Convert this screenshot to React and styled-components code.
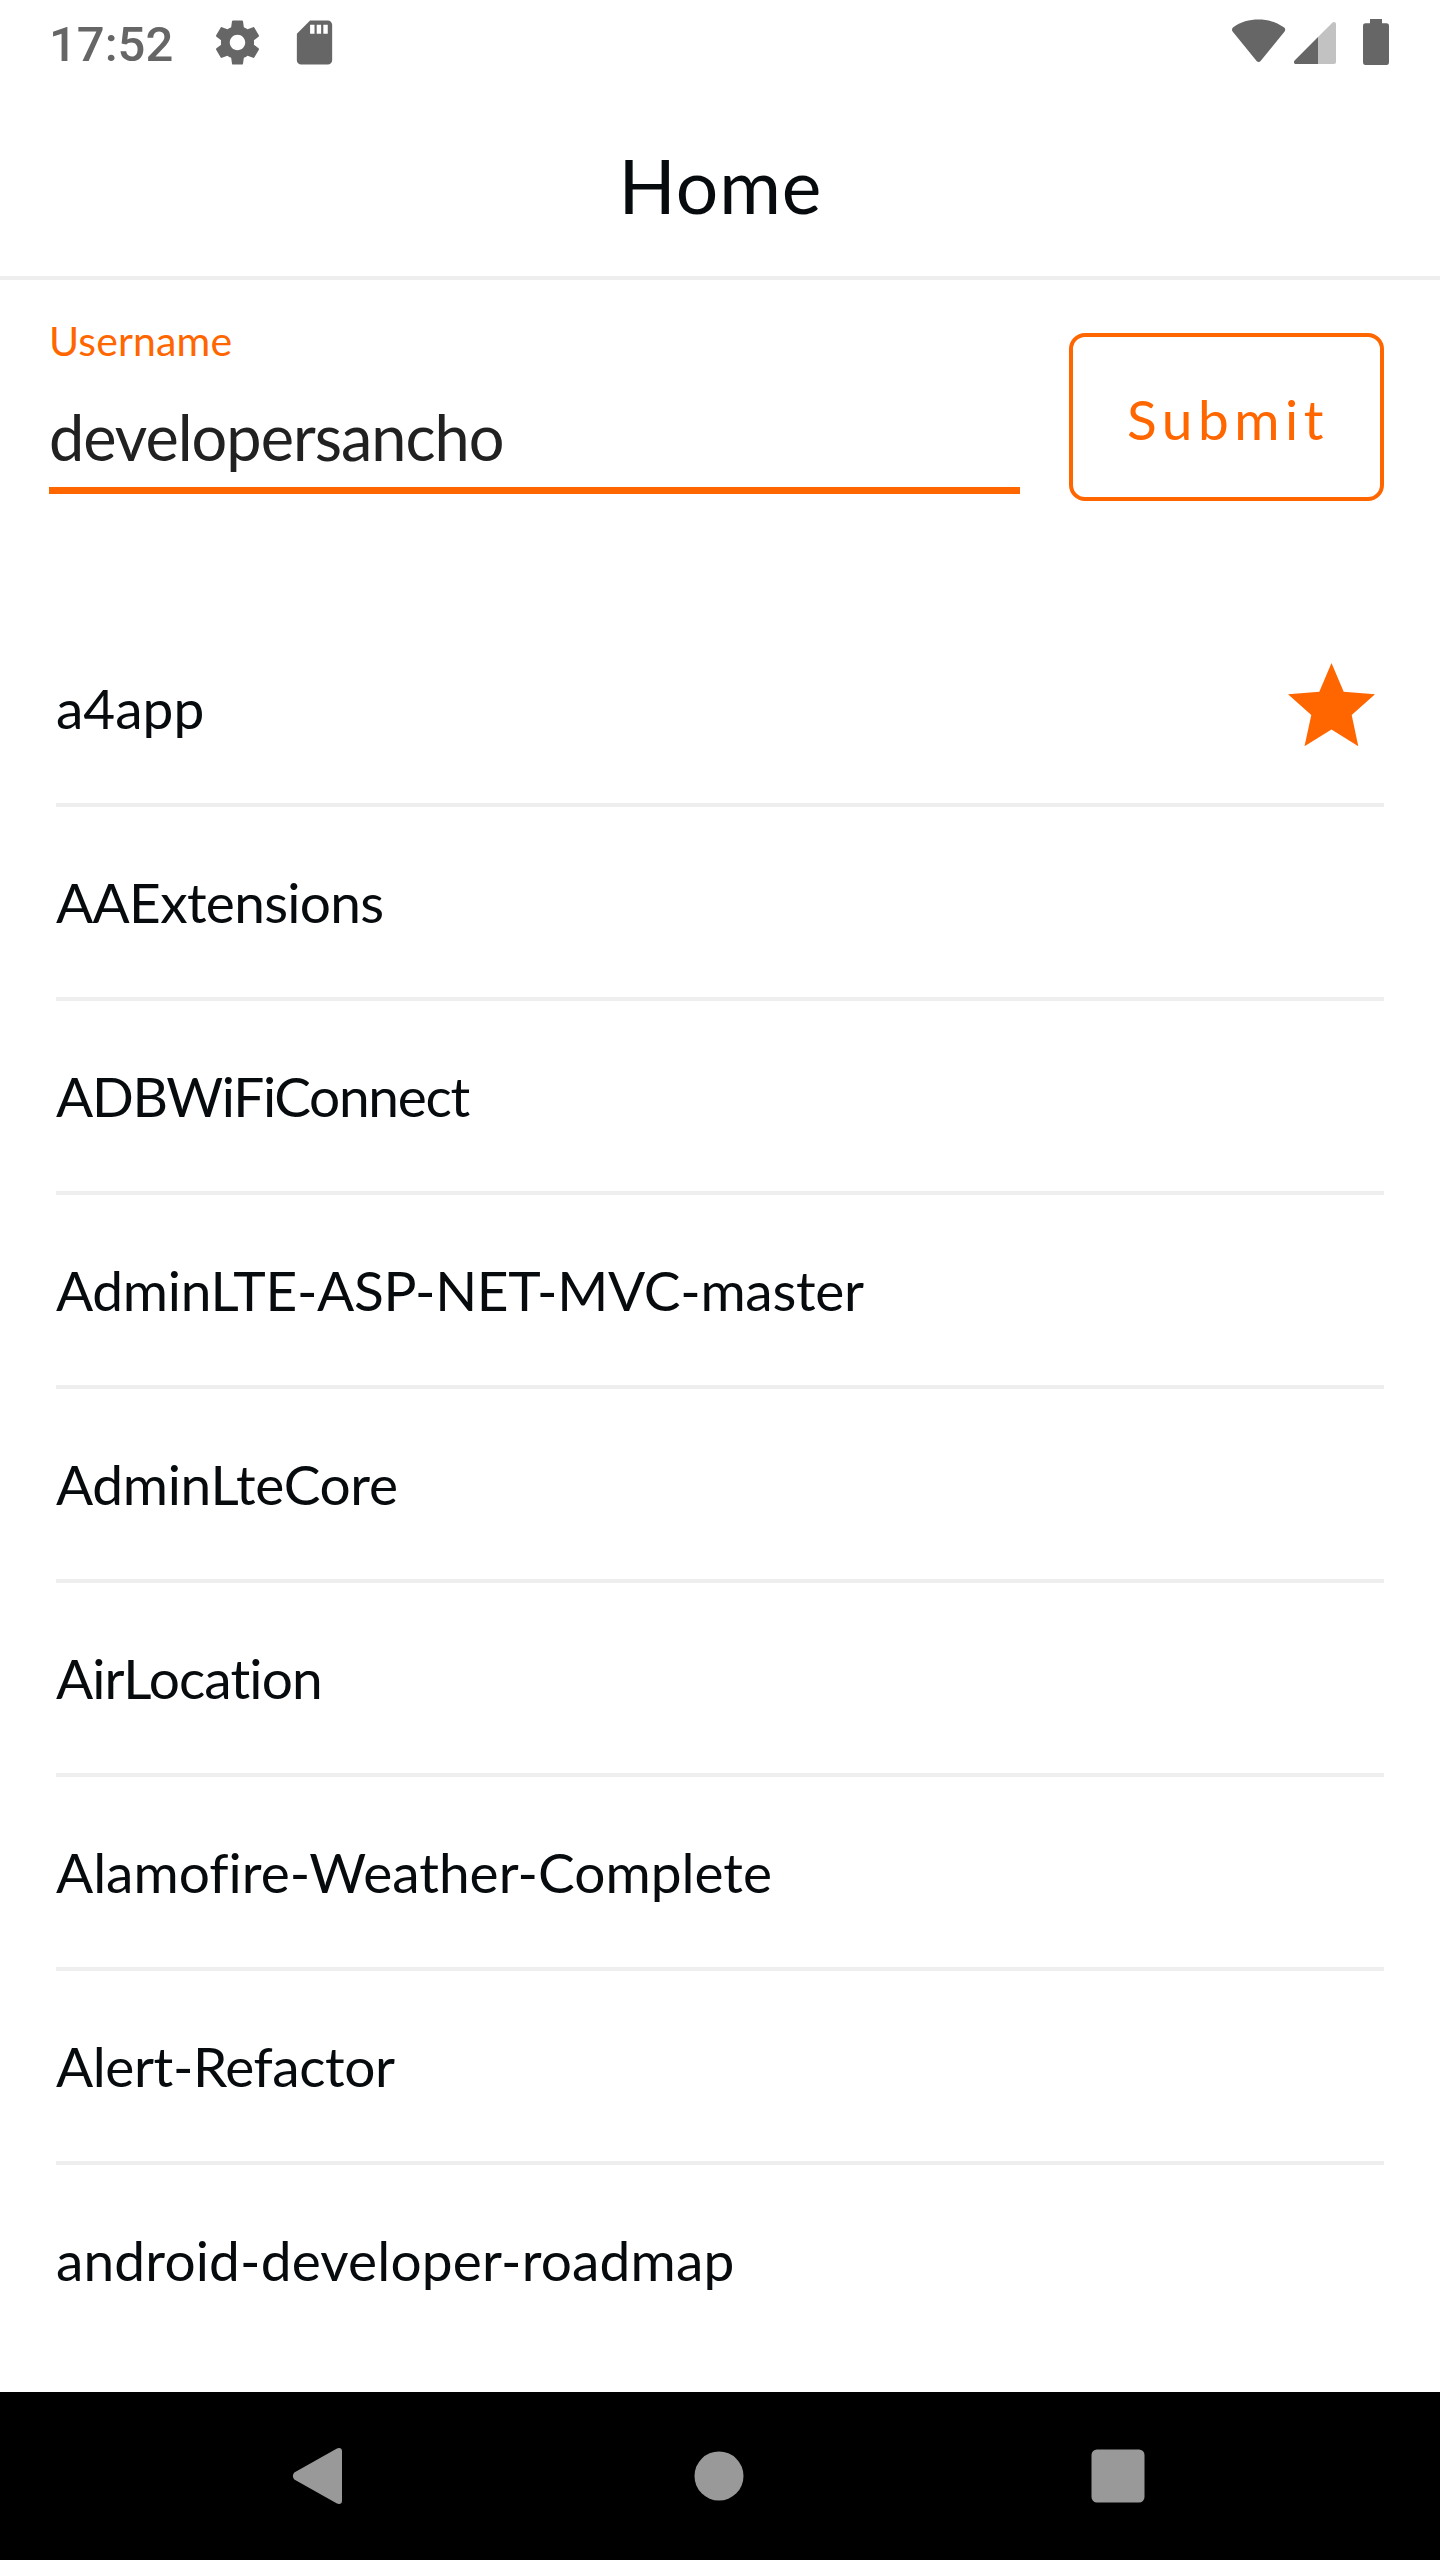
import React from "react";
import styled, { createGlobalStyle } from "styled-components";

const ORANGE = "#ff6600";
const INK = "#070b0e";
const STATUS = "#666666";
const NAV = "#999999";

const GlobalStyle = createGlobalStyle`
  * { box-sizing: border-box; }
  body { margin: 0; background: #ffffff; }
`;

const Screen = styled.div`
  display: flex;
  flex-direction: column;
  width: 1440px;
  height: 2560px;
  background: #ffffff;
  color: ${INK};
  font-family: Lato, "Open Sans", sans-serif;
  overflow: hidden;
`;

const StatusBar = styled.div`
  display: flex;
  align-items: center;
  flex: none;
  height: 84px;
  padding: 0 51px 0 49px;
`;

const Clock = styled.span`
  width: 162px;
  padding-top: 6px;
  font-family: Roboto, sans-serif;
  font-size: 49px;
  font-weight: 500;
  line-height: 58px;
  color: ${STATUS};
  white-space: nowrap;
`;

const StatusIcons = styled.div`
  display: flex;
  align-items: center;
  gap: ${(p) => p.$gap}px;
  margin-left: ${(p) => (p.$end ? "auto" : "0")};
`;

const Icon = styled.svg`
  display: block;
  flex: none;
`;

const Header = styled.header`
  display: flex;
  align-items: center;
  justify-content: center;
  flex: none;
  height: 196px;
  padding-top: 10px;
  border-bottom: 4px solid #eeeeee;
`;

const Title = styled.h1`
  margin: 0;
  padding-left: 1px;
  font-size: 75px;
  font-weight: 400;
  line-height: 90px;
  letter-spacing: 1px;
`;

const Form = styled.div`
  display: grid;
  grid-template-columns: 971px 315px;
  column-gap: 49px;
  align-items: start;
  flex: none;
  height: 333px;
  padding: 37px 56px 0 49px;
`;

const Field = styled.label`
  display: flex;
  flex-direction: column;
  gap: 33px;
`;

const FieldLabel = styled.span`
  font-size: 41px;
  line-height: 47px;
  letter-spacing: 0.13px;
  color: ${ORANGE};
`;

const FieldValue = styled.span`
  padding-bottom: 11px;
  border-bottom: 7px solid ${ORANGE};
  font-size: 63px;
  line-height: 79px;
  letter-spacing: -1px;
  color: #212121;
`;

const SubmitButton = styled.button`
  display: flex;
  align-items: center;
  height: 168px;
  margin: 16px 0 0;
  padding: 4px 0 0 54px;
  border: 4px solid ${ORANGE};
  border-radius: 16px;
  background: transparent;
  color: ${ORANGE};
  font-family: inherit;
  font-size: 55px;
  line-height: 66px;
  letter-spacing: 5.5px;
`;

const List = styled.ul`
  flex: 1;
  margin: 0;
  padding: 0 56px;
  list-style: none;
`;

const Row = styled.li`
  display: flex;
  align-items: center;
  justify-content: space-between;
  height: 194px;
  padding-right: 8px;
  border-bottom: 4px solid #eeeeee;

  &:last-child { border-bottom-color: transparent; }
`;

const RepoName = styled.span`
  font-size: 55px;
  line-height: 66px;
  letter-spacing: ${(p) => p.$tracking}px;
  white-space: nowrap;
`;

const StarMark = styled(Icon)`
  margin-bottom: 4px;
`;

const NavBar = styled.nav`
  display: grid;
  grid-template-columns: 402px 397px 54px;
  align-items: center;
  flex: none;
  height: 168px;
  padding-left: 292px;
  background: #000000;
`;

const repos = [
  { name: "a4app", tracking: 0, starred: true },
  { name: "AAExtensions", tracking: -0.68 },
  { name: "ADBWiFiConnect", tracking: -1.32 },
  { name: "AdminLTE-ASP-NET-MVC-master", tracking: -0.3 },
  { name: "AdminLteCore", tracking: -0.33 },
  { name: "AirLocation", tracking: -0.86 },
  { name: "Alamofire-Weather-Complete", tracking: 0.01 },
  { name: "Alert-Refactor", tracking: -0.4 },
  { name: "android-developer-roadmap", tracking: 0.17 },
];

const GearIcon = () => (
  <Icon width="53" height="53" viewBox="0 0 24 24" fill={STATUS}>
    <path d="M19.43 12.98c.04-.32.07-.64.07-.98s-.03-.66-.07-.98l2.11-1.65c.19-.15.24-.42.12-.64l-2-3.46c-.12-.22-.39-.3-.61-.22l-2.49 1c-.52-.4-1.08-.73-1.69-.98l-.38-2.65C14.46 2.18 14.25 2 14 2h-4c-.25 0-.46.18-.49.42l-.38 2.65c-.61.25-1.17.59-1.69.98l-2.49-1c-.23-.09-.49 0-.61.22l-2 3.46c-.13.22-.07.49.12.64l2.11 1.65c-.04.32-.07.65-.07.98s.03.66.07.98l-2.11 1.65c-.19.15-.24.42-.12.64l2 3.46c.12.22.39.3.61.22l2.49-1c.52.4 1.08.73 1.69.98l.38 2.65c.03.24.24.42.49.42h4c.25 0 .46-.18.49-.42l.38-2.65c.61-.25 1.17-.59 1.69-.98l2.49 1c.23.09.49 0 .61-.22l2-3.46c.12-.22.07-.49-.12-.64l-2.11-1.65zM12 15.5c-1.93 0-3.5-1.57-3.5-3.5s1.57-3.5 3.5-3.5 3.5 1.57 3.5 3.5-1.57 3.5-3.5 3.5z" />
  </Icon>
);

const SdCardIcon = () => (
  <Icon width="53" height="53" viewBox="0 0 24 24" fill={STATUS}>
    <path d="M18 2h-8L4.02 8 4 20c0 1.1.9 2 2 2h12c1.1 0 2-.9 2-2V4c0-1.1-.9-2-2-2zm-6 6h-2V4h2v4zm3 0h-2V4h2v4zm3 0h-2V4h2v4z" />
  </Icon>
);

const WifiIcon = () => (
  <Icon width="54" height="46" viewBox="0 0 54 46" fill={STATUS}>
    <path d="M1 8.6C8.5 2.8 17.4.6 26.6.6s18.1 2.2 25.6 8c1.3 1 1.3 2.6.4 3.8L28.6 42c-1.1 1.3-2.9 1.3-4 0L.6 12.400C-.3 11.200-.2 9.600 1 8.600z" />
  </Icon>
);

const SignalIcon = () => (
  <Icon width="42" height="46" viewBox="0 0 42 46">
    <path d="M24 18 38.300 3.700C39.700 2.300 42 3 42 5V43Q42 45 40 45H24z" fill="#c2c2c2" />
    <path d="M24 18V45H2C0 45-.8 42.900.6 41.500z" fill={STATUS} />
  </Icon>
);

const BatteryIcon = () => (
  <Icon width="26" height="46" viewBox="0 0 26 46" fill={STATUS}>
    <path d="M7 0H19V4.300H23.500Q26 4.300 26 7V43Q26 46 23.500 46H2.500Q0 46 0 43V7Q0 4.300 2.500 4.300H7z" />
  </Icon>
);

const StarIcon = () => (
  <StarMark width="90" height="86" viewBox="0 0 90 86" fill={ORANGE}>
    <path d="M45.500 0 57.700 28.800 89 31.200 65.700 52 72.300 83.200 45.500 66.500 18.500 83.200 25.300 52 2 31.200 33.300 28.800z" />
  </StarMark>
);

export default function App() {
  return (
    <>
      <GlobalStyle />
      <Screen>
        <StatusBar>
          <Clock>17:52</Clock>
          <StatusIcons $gap={24}>
            <GearIcon />
            <SdCardIcon />
          </StatusIcons>
          <StatusIcons $gap={19} $end>
            <StatusIcons $gap={8}>
              <WifiIcon />
              <SignalIcon />
            </StatusIcons>
            <StatusIcons $gap={0}>
              <Icon width="8" height="1" />
              <BatteryIcon />
            </StatusIcons>
          </StatusIcons>
        </StatusBar>
        <Header>
          <Title>Home</Title>
        </Header>
        <Form>
          <Field>
            <FieldLabel>Username</FieldLabel>
            <FieldValue>developersancho</FieldValue>
          </Field>
          <SubmitButton type="button">Submit</SubmitButton>
        </Form>
        <List>
          {repos.map((repo) => (
            <Row key={repo.name}>
              <RepoName $tracking={repo.tracking}>{repo.name}</RepoName>
              {repo.starred && <StarIcon />}
            </Row>
          ))}
        </List>
        <NavBar>
          <Icon width="51" height="58" viewBox="0 0 51 58" fill={NAV}>
            <path d="M2.300 25.500 44.500 1.700C47.500.2 50 1.300 50 4V54C50 56.700 47.500 57.800 44.500 56.300L2.300 32.500Q-.6 29 2.300 25.500z" />
          </Icon>
          <Icon width="50" height="50" viewBox="0 0 50 50" fill={NAV}>
            <circle cx="25" cy="25" r="24.500" />
          </Icon>
          <Icon width="54" height="54" viewBox="0 0 54 54" fill={NAV}>
            <rect x="0.500" y="0.500" width="53" height="53" rx="5.500" />
          </Icon>
        </NavBar>
      </Screen>
    </>
  );
}
